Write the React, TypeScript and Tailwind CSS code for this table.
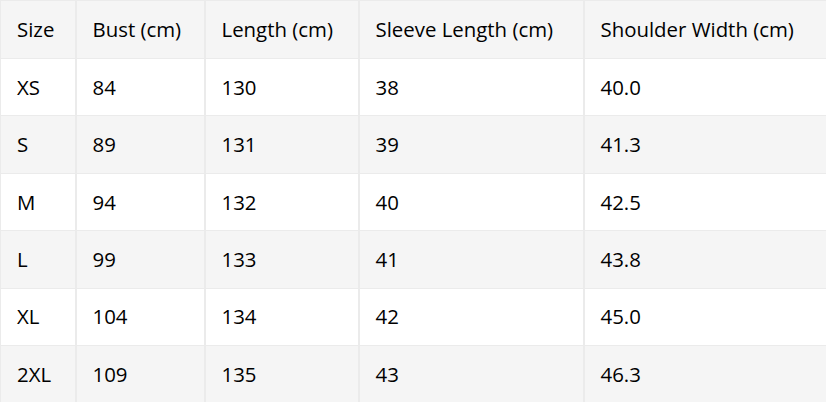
const headers = ["Size", "Bust (cm)", "Length (cm)", "Sleeve Length (cm)", "Shoulder Width (cm)"];

const rows = [
  ["XS", "84", "130", "38", "40.0"],
  ["S", "89", "131", "39", "41.3"],
  ["M", "94", "132", "40", "42.5"],
  ["L", "99", "133", "41", "43.8"],
  ["XL", "104", "134", "42", "45.0"],
  ["2XL", "109", "135", "43", "46.3"],
];

const widths = ["w-[75px]", "w-[129px]", "w-[154px]", "w-[225px]", "w-[243px]"];

export default function App() {
  return (
    <div className="w-[826px] h-[402px] overflow-hidden bg-white font-['Open_Sans',sans-serif] text-[20.4px] text-black">
      <table className="w-[826px] table-fixed border-collapse border-t border-l border-[#ebebeb]">
        <colgroup>
          {widths.map((w) => (
            <col key={w} className={w} />
          ))}
        </colgroup>
        <thead>
          <tr className="h-[58px] bg-[#f5f5f5]">
            {headers.map((h, i) => (
              <th
                key={h}
                className={`pl-4 pr-0 text-left font-normal whitespace-nowrap border-b border-[#ebebeb] ${i > 0 ? "border-l-2" : ""}`}
              >
                {h}
              </th>
            ))}
          </tr>
        </thead>
        <tbody>
          {rows.map((r, ri) => (
            <tr key={r[0]} className={`h-[57.4px] ${ri % 2 === 1 ? "bg-[#f5f5f5]" : "bg-white"}`}>
              {r.map((c, i) => (
                <td
                  key={i}
                  className={`pl-4 pr-0 border-b border-[#ebebeb] ${i > 0 ? "border-l-2" : ""}`}
                >
                  {c}
                </td>
              ))}
            </tr>
          ))}
        </tbody>
      </table>
    </div>
  );
}
